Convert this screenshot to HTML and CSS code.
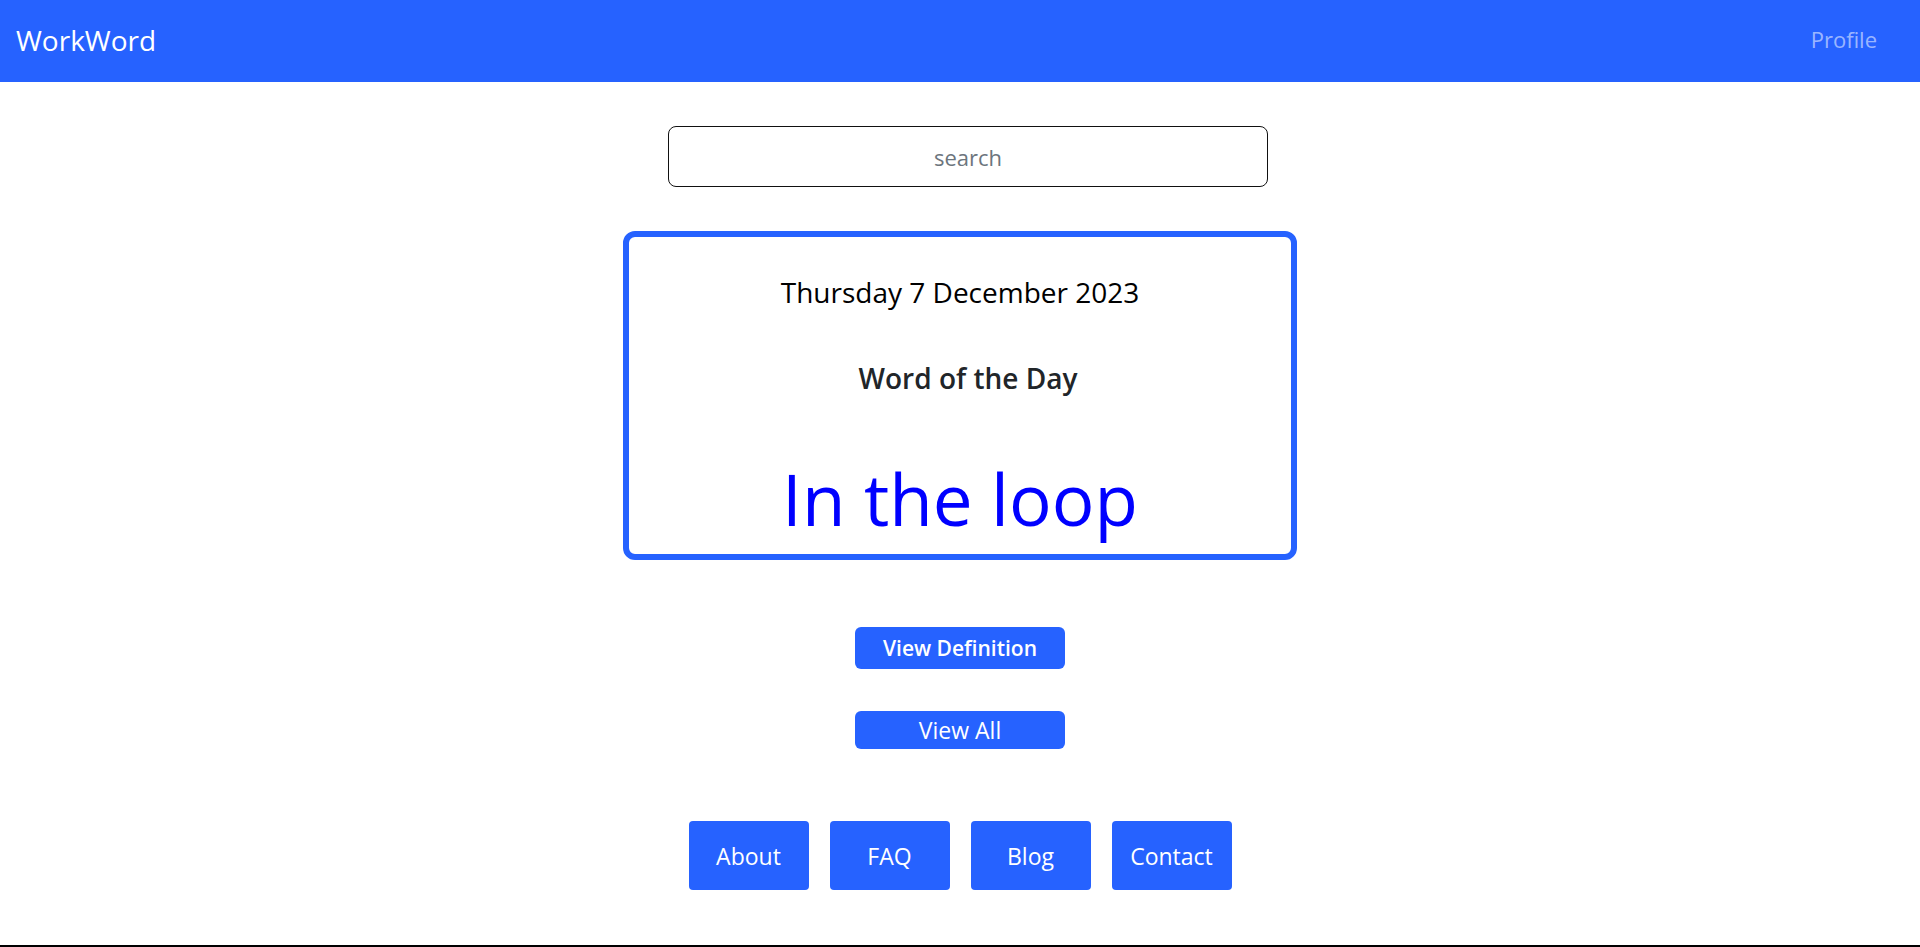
FILE: index.html
```html
<!DOCTYPE html>
<html lang="en">
<head>
<meta charset="utf-8">
<title>WorkWord</title>
<link rel="stylesheet" href="styles.css">
</head>
<body>
<nav class="navbar">
  <a class="brand" href="#">WorkWord</a>
  <a class="nav-link" href="#">Profile</a>
</nav>
<main class="main">
  <input class="search" type="text" placeholder="search">
  <section class="card">
    <p class="date">Thursday 7 December 2023</p>
    <h2 class="card-title">Word of the Day</h2>
    <p class="word">In the loop</p>
  </section>
  <button class="btn btn-def">View Definition</button>
  <button class="btn btn-all">View All</button>
  <div class="links">
    <a class="link-btn" href="#">About</a>
    <a class="link-btn" href="#">FAQ</a>
    <a class="link-btn" href="#">Blog</a>
    <a class="link-btn" href="#">Contact</a>
  </div>
</main>
<footer class="footer"></footer>
</body>
</html>
```

FILE: styles.css
```css
* { box-sizing: border-box; }
html, body { margin: 0; padding: 0; }
body {
  font-family: "Open Sans", "Noto Sans", sans-serif;
  background: #fff;
  color: #212529;
  overflow: hidden;
}
.navbar {
  height: 82px;
  background: #2662ff;
  display: flex;
  align-items: center;
  justify-content: space-between;
  padding: 0 43px 0 16px;
}
.brand {
  color: #fff;
  font-size: 28px;
  text-decoration: none;
  line-height: 1;
  padding-bottom: 2px;
}
.nav-link {
  color: rgba(255, 255, 255, 0.55);
  font-size: 22px;
  text-decoration: none;
  line-height: 1;
  padding-bottom: 4px;
}
.main {
  display: flex;
  flex-direction: column;
  align-items: center;
}
.search {
  margin-top: 44px;
  margin-left: 16px;
  width: 600px;
  height: 61px;
  border: 1px solid #111;
  border-radius: 8px;
  font-family: inherit;
  font-size: 22px;
  text-align: center;
  color: #212529;
  outline: none;
}
.search::placeholder { color: #6c757d; }
.card {
  margin-top: 44px;
  width: 674px;
  height: 329px;
  border: 6px solid #2662ff;
  border-radius: 12px;
  padding-top: 38px;
  text-align: center;
}
.date {
  margin: 0;
  font-size: 28px;
  line-height: 34px;
  color: #000;
}
.card-title {
  margin: 53px 0 0;
  padding-left: 16px;
  font-size: 28px;
  font-weight: 600;
  line-height: 32px;
  color: #212529;
}
.word {
  margin: 62px 0 0;
  font-size: 71px;
  line-height: 85px;
  color: #0000ff;
}
.btn {
  width: 210px;
  border: none;
  border-radius: 6px;
  background: #2662ff;
  color: #fff;
  font-family: inherit;
  padding: 0;
  cursor: pointer;
}
.btn-def {
  margin-top: 67px;
  height: 42px;
  font-size: 21px;
  font-weight: 600;
}
.btn-all {
  margin-top: 42px;
  height: 38px;
  font-size: 23px;
  font-weight: 400;
}
.links {
  margin-top: 72px;
  display: flex;
  gap: 21px;
}
.link-btn {
  width: 120px;
  height: 69px;
  display: flex;
  align-items: center;
  justify-content: center;
  background: #2662ff;
  color: #fff;
  border-radius: 4px;
  font-size: 23px;
  text-decoration: none;
}
.footer {
  margin-top: 55px;
  border-top: 3px solid #000;
}
```
